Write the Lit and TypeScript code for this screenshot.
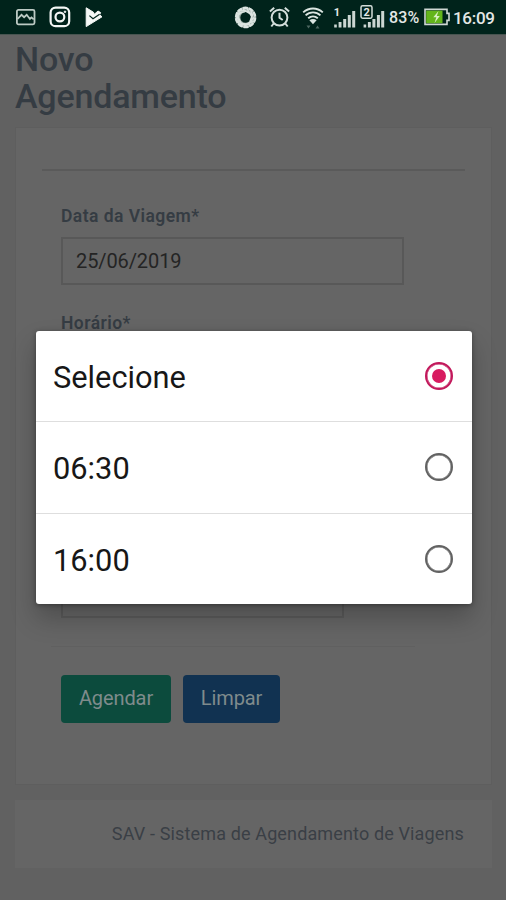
import { LitElement, html, css } from "lit";
import { customElement, state } from "lit/decorators.js";
import { classMap } from "lit/directives/class-map.js";

@customElement("status-bar")
class StatusBar extends LitElement {
  static styles = css`
    :host {
      display: block;
      height: 34px;
      background: #00231b;
      color: #e3e8e6;
      font: 500 16px/34px Roboto, sans-serif;
    }
    .bar {
      display: flex;
      justify-content: space-between;
      height: 34px;
      padding: 0 11px 0 15px;
      white-space: nowrap;
    }
    .side {
      display: flex;
      align-items: center;
    }
    .notices {
      gap: 13px;
    }
    .clock {
      margin-left: 3px;
      width: 42px;
      padding-top: 1px;
      font-size: 17px;
      letter-spacing: -0.3px;
    }
    .percent {
      width: 35px;
      margin-left: 4px;
      padding-top: 2px;
      letter-spacing: 0.2px;
    }
    .alarm {
      margin-left: 11px;
    }
    .wifi {
      margin-left: 12px;
    }
    .signals {
      margin-left: 9px;
    }
    .sim {
      font: 700 11px Roboto, sans-serif;
    }
    svg {
      display: block;
      flex: none;
    }
  `;

  render() {
    return html`
      <div class="bar">
        <div class="side notices">
          <svg width="21" height="24" viewBox="0 0 21 24" fill="none" stroke="#bccac4" stroke-width="1.8">
            <rect x="1.9" y="4.9" width="17.6" height="14.4" rx="1.5" />
            <path d="M2.5 14l4-4.2 2.6 2.4 2.6-2.4 3.2 4.2 1.6-1.6 2.2 2" />
          </svg>
          <svg width="22" height="24" viewBox="0 0 22 24" fill="none" stroke="#f4f7f5" stroke-width="2.2">
            <rect x="1.6" y="2.6" width="18.6" height="18.6" rx="5" />
            <circle cx="10.9" cy="12" r="4.4" />
            <circle cx="16" cy="6.8" r=".8" stroke-width="1" fill="#f4f7f5" />
          </svg>
          <svg width="19" height="24" viewBox="0 0 19 24">
            <path
              d="M2.2 2.8l7.2 4.4 1 2L14 6l2.6 1.6-1 2.2 2.4 2L2.2 21.6z"
              fill="#f6f8f7"
              stroke="#f6f8f7"
              stroke-linejoin="round"
            />
            <path d="M5.4 10.6l3.6 3.2 6.6-4.6" stroke="#00231b" stroke-width="1.2" fill="none" />
          </svg>
        </div>
        <div class="side">
          <svg width="24" height="24" viewBox="0 0 24 24" fill="none" stroke="#dbe4e0">
            <circle cx="12.6" cy="12.4" r="7.8" stroke-width="5" stroke="#a4b4ae" />
            <circle cx="12.6" cy="12.4" r="9.6" stroke-width="2.4" stroke-dasharray="5.2 .8" />
            <path
              stroke-width="1.5"
              d="M5 5.5l10 1M4 8.5l8-2M3 12.5l5-5M3 15.5l3-7M6 19.5l-1-9M9 21.5l-3-8M14 21.5l-7-4M17 19.5l-8-1M20 16.5l-8 3M21 12.5l-5 6M20 8.5l-3 8M18 5.5l1 9M14 3.5l4 7M10 4.5l7 4"
            />
          </svg>
          <svg class="alarm" width="22" height="24" viewBox="0 0 22 24" fill="none" stroke="#d3dedb" stroke-width="2">
            <circle cx="11.5" cy="12.6" r="7.9" />
            <path d="M11.5 7.8v5l3.2 2.2M1.9 6.4l4.3-3.7M21.1 6.4l-4.3-3.7M5.7 18.5l-2.4 3M17.3 18.5l2.4 3" />
          </svg>
          <svg class="wifi" width="22" height="24" viewBox="0 0 22 24" fill="none" stroke="#dbe5e1" stroke-width="1.9">
            <path d="M1.2 7.4C7 2.2 15 2.2 20.8 7.4M3.6 10.4c4.3-4 10.5-4 14.8 0M6.2 13.3c2.8-2.5 6.8-2.5 9.6 0" />
            <path d="M7.4 15.2q3.6-2.6 7.2 0L11 19.2z" fill="#dbe5e1" stroke="none" />
            <path d="M4.5 20.4h4l-2 3zM13.5 23.4h4l-2-3z" fill="#4d6761" stroke="none" />
          </svg>
          <svg class="signals" width="52" height="28" viewBox="0 0 52 28">
            <g fill="#cbd6d2">
              <path d="M1.2 21.6h2.6v3H1.2zM5.6 19h2.9v5.6H5.6zM10.2 16h3v8.6h-3zM14.8 12h3v12.6h-3zM19.2 8h3v16.6h-3z" />
              <path d="M30.6 21.6h2.6v3h-2.6zM34.9 19h2.9v5.6h-2.9zM39.4 16h3v8.6h-3zM43.9 12h3v12.6h-3zM48.2 8h3v16.6h-3z" />
            </g>
            <text class="sim" x="0.8" y="12.6" fill="#e3e8e6">1</text>
            <rect x="28" y="2.8" width="11" height="12.4" rx="1.6" fill="#00231b" stroke="#d3ddd9" stroke-width="1.5" />
            <text class="sim" x="30.4" y="13" fill="#e3e8e6">2</text>
          </svg>
          <span class="percent">83%</span>
          <svg width="26" height="18" viewBox="0 0 26 18">
            <path d="M1 1.4h22v4h2v7h-2v4H1z" fill="#00231b" stroke="#cfd8d4" stroke-width="1.6" />
            <path d="M2.2 2.6h16.3v12.6H2.2z" fill="#63b51b" />
            <path d="M14.5 3L9.3 9.3h3L10.5 15l5.3-7h-3z" fill="#d9efc5" />
          </svg>
          <span class="clock">16:09</span>
        </div>
      </div>
    `;
  }
}

@customElement("booking-page")
class BookingPage extends LitElement {
  static styles = css`
    :host {
      display: block;
      box-sizing: border-box;
      height: 866px;
      padding: 6px 14px 0 15px;
      background: #616161;
      color: #353c43;
      font: 400 18px/24px Roboto, sans-serif;
      border-top: 1px solid #475450;
    }
    h1 {
      margin: 0 0 12px;
      font-weight: 500;
      font-size: 34px;
      line-height: 37px;
      letter-spacing: -0.18px;
      width: 260px;
    }
    .card {
      box-sizing: border-box;
      height: 658px;
      padding: 41px 26px 0;
      background: #656565;
      border: 1px solid #5e5e5e;
    }
    .rule {
      height: 2px;
      background: #5a5a5a;
    }
    .form {
      padding: 33px 0 0 19px;
    }
    .label {
      font-weight: 600;
      font-size: 17.5px;
      letter-spacing: 0.45px;
      height: 24px;
    }
    .input {
      box-sizing: border-box;
      height: 48px;
      margin: 9px 0 26px;
      padding: 0 13px;
      width: 343px;
      border: 2px solid #585858;
      color: #242424;
      font-size: 20px;
      line-height: 45px;
      letter-spacing: -0.1px;
    }
    .select {
      box-sizing: border-box;
      width: 283px;
      height: 48px;
      margin-top: 235px;
      border: 2px solid #5a5a5a;
    }
    .divider {
      height: 1px;
      margin: 28px 50px 28px -10px;
      background: #606060;
    }
    .actions {
      display: flex;
      gap: 12px;
    }
    .btn {
      height: 48px;
      border-radius: 4px;
      color: #7f8b8c;
      font-size: 20px;
      line-height: 47px;
      text-align: center;
    }
    .save {
      width: 110px;
      background: #0c4b3d;
      letter-spacing: -0.1px;
    }
    .clear {
      width: 97px;
      background: #113251;
      letter-spacing: -0.1px;
    }
    .footer {
      margin-top: 15px;
      height: 68px;
      box-sizing: border-box;
      padding: 22px 28px 0 0;
      background: #656565;
      text-align: right;
      font-size: 18px;
      line-height: 24px;
      letter-spacing: 0.14px;
      color: #3a3f45;
      white-space: nowrap;
    }
  `;

  render() {
    return html`
      <h1>Novo<br />Agendamento</h1>
      <div class="card">
        <div class="rule"></div>
        <div class="form">
          <div class="label">Data da Viagem*</div>
          <div class="input">25/06/2019</div>
          <div class="label">Horário*</div>
          <div class="select"></div>
          <div class="divider"></div>
          <div class="actions">
            <div class="btn save">Agendar</div>
            <div class="btn clear">Limpar</div>
          </div>
        </div>
      </div>
      <div class="footer">SAV - Sistema de Agendamento de Viagens</div>
    `;
  }
}

@customElement("app-root")
class AppRoot extends LitElement {
  static styles = css`
    :host {
      display: block;
      position: relative;
      width: 506px;
      height: 900px;
      overflow: hidden;
    }
    .dialog {
      position: absolute;
      left: 36px;
      top: 331px;
      width: 436px;
      height: 273px;
      border-radius: 3px;
      background: #fff;
      box-shadow: 0 14px 26px rgba(0, 0, 0, 0.24), 0 1px 5px rgba(0, 0, 0, 0.35);
      font: 400 30.8px/36px Roboto, sans-serif;
      color: #171717;
    }
    .option {
      display: flex;
      align-items: center;
      justify-content: space-between;
      box-sizing: border-box;
      height: 90px;
      padding: 4px 19px 0 17px;
      cursor: pointer;
    }
    .option + .option {
      border-top: 1.5px solid #dedede;
      height: 91.5px;
    }
    .radio {
      display: grid;
      place-items: center;
      box-sizing: border-box;
      width: 28px;
      height: 28px;
      margin-top: -4px;
      border: 2px solid #626262;
      box-shadow: inset 0 0 0 0.5px #626262;
      border-radius: 50%;
    }
    .radio.on {
      border-color: #c2185b;
      box-shadow: inset 0 0 0 0.5px #c2185b;
    }
    .radio.on::after {
      content: "";
      width: 14px;
      height: 14px;
      border-radius: 50%;
      background: #d81b60;
    }
  `;

  @state() private selected = "Selecione";
  private options = ["Selecione", "06:30", "16:00"];

  render() {
    return html`
      <status-bar></status-bar>
      <booking-page></booking-page>
      <div class="dialog">
        ${this.options.map(
          (o) => html`
            <div class="option" @click=${() => (this.selected = o)}>
              <span>${o}</span>
              <span class=${classMap({ radio: true, on: o === this.selected })}></span>
            </div>
          `
        )}
      </div>
    `;
  }
}
